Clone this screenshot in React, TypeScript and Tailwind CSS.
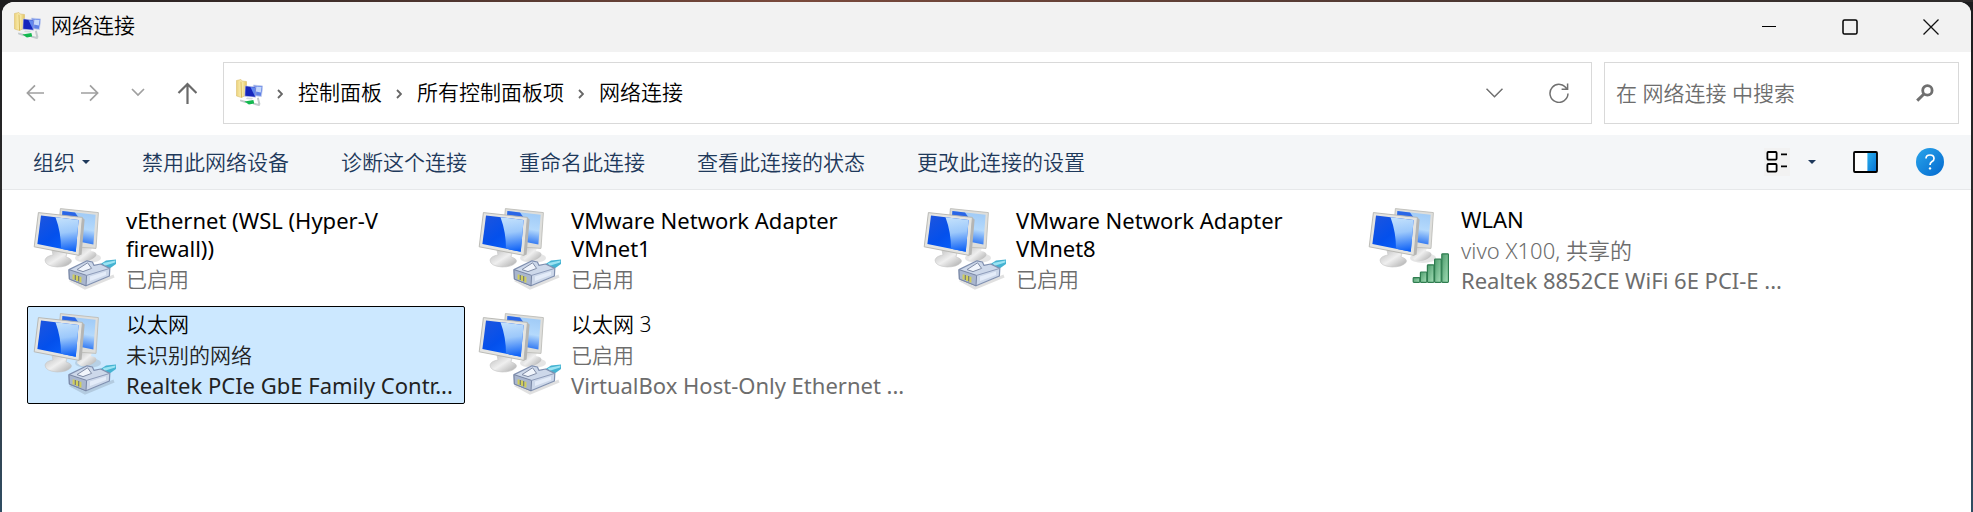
import { useState } from 'react';

type Badge = 'cable' | 'signal';

interface Connection {
  id: string;
  name: string;
  details: string[];
  badge: Badge;
}

const connections: Connection[] = [
  { id: 'wsl', name: 'vEthernet (WSL (Hyper-V firewall))', details: ['已启用'], badge: 'cable' },
  { id: 'vmnet1', name: 'VMware Network Adapter VMnet1', details: ['已启用'], badge: 'cable' },
  { id: 'vmnet8', name: 'VMware Network Adapter VMnet8', details: ['已启用'], badge: 'cable' },
  { id: 'wlan', name: 'WLAN', details: ['vivo X100, 共享的', 'Realtek 8852CE WiFi 6E PCI-E ...'], badge: 'signal' },
  { id: 'eth', name: '以太网', details: ['未识别的网络', 'Realtek PCIe GbE Family Contr...'], badge: 'cable' },
  { id: 'eth3', name: '以太网 3', details: ['已启用', 'VirtualBox Host-Only Ethernet ...'], badge: 'cable' },
];

const commands = ['禁用此网络设备', '诊断这个连接', '重命名此连接', '查看此连接的状态', '更改此连接的设置'];
const crumbs = ['控制面板', '所有控制面板项', '网络连接'];

// 以西文开头的行字号略大，纯西文行再加粗一档，与中文视觉上保持一致
function textCls(text: string) {
  if (!/^[A-Za-z]/.test(text)) return 'text-[21px]';
  return /[\u4e00-\u9fff]/.test(text) ? 'text-[22px]' : 'text-[22px] font-normal';
}

// 渐变只定义一次，供所有图标引用
function IconDefs() {
  return (
    <svg width="0" height="0" className="absolute" aria-hidden="true">
      <defs>
        <linearGradient id="screen" x1="0" y1="0" x2="0.9" y2="1">
          <stop offset="0" stopColor="#1f55dd" />
          <stop offset="0.5" stopColor="#0450ec" />
          <stop offset="1" stopColor="#0a66ff" />
        </linearGradient>
        <linearGradient id="glare" x1="0.3" y1="0" x2="0.4" y2="1">
          <stop offset="0" stopColor="#c3e1fc" />
          <stop offset="0.45" stopColor="#9cc8fb" />
          <stop offset="1" stopColor="#0f62f6" />
        </linearGradient>
        <linearGradient id="backScreen" x1="0.6" y1="0" x2="0.4" y2="1">
          <stop offset="0" stopColor="#9fcaf6" />
          <stop offset="0.5" stopColor="#b4d9fc" />
          <stop offset="1" stopColor="#1765f0" />
        </linearGradient>
        <linearGradient id="stand" x1="0" y1="0" x2="1" y2="1">
          <stop offset="0" stopColor="#b9b9b9" />
          <stop offset="0.5" stopColor="#efefef" />
          <stop offset="1" stopColor="#a9a9a9" />
        </linearGradient>
        <linearGradient id="bar" x1="0" y1="0" x2="1" y2="1">
          <stop offset="0" stopColor="#4c9b6c" />
          <stop offset="1" stopColor="#a6dfb8" />
        </linearGradient>
        <linearGradient id="folder" x1="0" y1="0" x2="1" y2="0">
          <stop offset="0" stopColor="#ecd27a" />
          <stop offset="0.5" stopColor="#fbf0b8" />
          <stop offset="1" stopColor="#e3c562" />
        </linearGradient>
        <linearGradient id="paneFill" x1="0" y1="0" x2="1" y2="1">
          <stop offset="0" stopColor="#2bb0ee" />
          <stop offset="1" stopColor="#0570d2" />
        </linearGradient>
      </defs>
    </svg>
  );
}

function FolderIcon() {
  return (
    <svg width="28" height="28" viewBox="0 0 28 28" className="shrink-0" aria-hidden="true">
      <path d="M1.5 1.5 L6 0.5 L7 2 L11.5 2.5 L11.5 16 L6.5 18.5 L1.5 17 Z" fill="url(#folder)" stroke="#dcc070" strokeWidth="0.6" />
      <path d="M6 2.5 L6.5 18.5" stroke="#d8ba5a" strokeWidth="1" />
      <path d="M18.4 6 L27.8 7 L26.4 17.4 L18.4 16.6 Z" fill="#5f80e6" stroke="#c8d2ee" strokeWidth="0.8" />
      <path d="M21.4 7.4 L26.6 8 L25.8 13.4 L20.9 12.6 Z" fill="#c5d8fb" />
      <path d="M10.2 6.8 L20.8 8 L20.6 18.2 L9.8 17.2 Z" fill="#1626bc" stroke="#dfe3ee" strokeWidth="0.6" />
      <path d="M15.4 8 L20.2 8.6 L20 17.6 Z" fill="#6288ee" />
      <path d="M12 18.6 L18 19 L17 20.6 L11 20 Z" fill="#d7dade" />
      <path d="M6 21.6 L10.4 23 M18.8 24.6 L24 26 M23 19.6 L24.4 25" stroke="#c3cacc" strokeWidth="2" fill="none" strokeLinecap="round" />
      <path d="M9.4 22.6 L18.4 21 L19.2 24.4 L13.9 25.4 Z" fill="#14b850" />
    </svg>
  );
}

function ConnectionIcon({ badge }: { badge: Badge }) {
  return (
    <svg width="84" height="84" viewBox="0 0 84 84" className="shrink-0" aria-hidden="true">
      {/* 后面的显示器 */}
      <ellipse cx="55" cy="50" rx="13" ry="5" fill="#000" opacity="0.1" />
      <path d="M47 37 L59 39 L58 43 Q65 44 63 48 Q58 54 48 53 L44 50 Z" fill="url(#stand)" />
      <path d="M27.4 0.6 L65.4 4.6 L63 40.4 L44 39 L25 30 Z" fill="#dededb" stroke="#bdbdb9" strokeWidth="0.9" />
      <path d="M29.4 3 L62.6 6.8 L60.4 36.6 L28 30 Z" fill="url(#backScreen)" />
      <path d="M29.4 3 L42 4.4 L46 10 L29 8 Z" fill="#2a66e6" />
      {/* 前面的显示器 */}
      <path d="M19 42 L34 45 L33 49 Q40 51 38 54.5 Q34 59 24 59 Q12 58 12 52 Q13 48 20 47 Z" fill="url(#stand)" stroke="#c4c4c4" strokeWidth="0.6" />
      <path d="M5.4 4.6 L49.4 9.4 L46 47.4 L1.2 38.8 Z" fill="#e4e4e1" stroke="#b4b4b0" strokeWidth="0.9" />
      <path d="M49.4 9.4 L51.6 11.4 L48.6 46.4 L46 47.4 Z" fill="#b5b5b3" />
      <path d="M8 7.4 L45.6 12 L42.8 43.8 L4.4 36 Z" fill="url(#screen)" />
      <path d="M22.5 9.2 L45.6 12 L42.8 43.8 L28 40.8 Q28 24 22.5 9.2 Z" fill="url(#glare)" />
      {badge === 'cable' ? (
        <>
          <path d="M37 72 L52 80 L81 68" stroke="#000" strokeOpacity="0.12" strokeWidth="3" fill="none" />
          <path d="M66 57 L73 52.4 L83 51.6 L83 56 L76 61 L68 62 Z" fill="#45b3d2" />
          <path d="M70 55 L82.5 52.6 L82 54.4 L71 58 Z" fill="#9be3f2" />
          <path d="M36 61.6 L54 52.8 L59.4 54 L61 57.4 L67.6 56 L76.8 60.4 L76.4 68 L53 77.8 L36.4 71 Z" fill="#cdd8ea" stroke="#8090b0" strokeWidth="1.2" strokeLinejoin="round" />
          <path d="M36 61.6 L53.6 67.4 L53 77.8 L36.4 71 Z" fill="#a9b6ce" stroke="#7886a4" strokeWidth="1" />
          <path d="M53.6 67.4 L76.8 60.4" stroke="#8e9cba" strokeWidth="1" />
          <path d="M44 61.6 L54.6 54.8 L58.6 60.4 L50 63.6 Z" fill="#f1f5fc" stroke="#808ca6" strokeWidth="1" />
          <path d="M57 68.4 L73 63.6 L73 67 L57 73 Z" fill="#e4ecf9" />
          <path d="M40.6 66.4 L40.6 71.6 M44 67.6 L44 73 M47.4 68.8 L47.4 74.4" stroke="#d2cf58" strokeWidth="2" />
          <path d="M42.3 67 L42.3 72 M45.7 68 L45.7 73.4" stroke="#6d6f50" strokeWidth="0.9" />
        </>
      ) : (
        <g fill="url(#bar)" stroke="#2f7d50" strokeWidth="1.2">
          <rect x="45.2" y="69.6" width="6.6" height="4.8" rx="0.8" />
          <rect x="52.4" y="64" width="6.4" height="10.4" rx="0.8" />
          <rect x="59.4" y="56.8" width="6.6" height="17.6" rx="0.8" />
          <rect x="66.6" y="51.2" width="6.6" height="23.2" rx="0.8" />
          <rect x="73.8" y="45.8" width="6.6" height="28.6" rx="0.8" />
        </g>
      )}
    </svg>
  );
}

function Caret() {
  return (
    <svg width="8" height="4" viewBox="0 0 8 4" aria-hidden="true">
      <path d="M0 0 H8 L4 4 Z" fill="#1e395b" />
    </svg>
  );
}

function TitleBar() {
  return (
    <header className="flex h-[50px] items-center justify-between bg-[#f2f2f2] pl-[11px]">
      <div className="flex items-center gap-2.5 pb-0.5">
        <FolderIcon />
        <h1 className="pb-0.5 text-black">网络连接</h1>
      </div>
      <div className="flex h-full">
        <button type="button" aria-label="最小化" className="flex w-[81px] items-center justify-center hover:bg-black/5">
          <svg width="16" height="16" viewBox="0 0 16 16">
            <path d="M1 7.5 H15" stroke="#000" />
          </svg>
        </button>
        <button type="button" aria-label="最大化" className="flex w-[81px] items-center justify-center hover:bg-black/5">
          <svg width="16" height="16" viewBox="0 0 16 16">
            <rect x="1" y="1" width="14" height="14" rx="1.6" fill="none" stroke="#000" strokeWidth="1.5" />
          </svg>
        </button>
        <button type="button" aria-label="关闭" className="flex w-[81px] items-center justify-center hover:bg-black/5">
          <svg width="16" height="16" viewBox="0 0 16 16">
            <path d="M0.5 0.5 L15.5 15.5 M15.5 0.5 L0.5 15.5" stroke="#111" strokeWidth="1.3" />
          </svg>
        </button>
      </div>
    </header>
  );
}

function AddressRow() {
  const [keyword, setKeyword] = useState('');

  return (
    <div className="flex items-center gap-3 pt-2.5 pr-3 pb-[11px]">
      <div className="flex w-[209px] shrink-0 items-center pl-6">
        <button type="button" aria-label="后退" className="mr-[37px]">
          <svg width="18" height="18" viewBox="0 0 18 18" fill="none" stroke="#a0a0a0" strokeWidth="1.7">
            <path d="M18 9 H1.4 M9 1.4 L1.4 9 L9 16.6" />
          </svg>
        </button>
        <button type="button" aria-label="前进" className="mr-8">
          <svg width="18" height="18" viewBox="0 0 18 18" fill="none" stroke="#a0a0a0" strokeWidth="1.7">
            <path d="M0 9 H16.6 M9 1.4 L16.6 9 L9 16.6" />
          </svg>
        </button>
        <button type="button" aria-label="最近浏览的位置" className="mr-8">
          <svg width="14" height="18" viewBox="0 0 14 18" fill="none" stroke="#a0a0a0" strokeWidth="1.7">
            <path d="M1 5 L7 11 L13 5" />
          </svg>
        </button>
        <button type="button" aria-label="向上">
          <svg width="20" height="22" viewBox="0 0 20 22" fill="none" stroke="#6a6a6a" strokeWidth="2.2">
            <path d="M10.5 22 V2 M1.5 11 L10.5 2 L19.5 11" />
          </svg>
        </button>
      </div>

      <div className="flex h-[62px] min-w-0 flex-1 items-center border border-[#d9d9d9] pr-[22px] pl-[11px]">
        <FolderIcon />
        <nav aria-label="地址" className="flex min-w-0 flex-1 items-center pb-0.5">
          {crumbs.map((crumb) => (
            <span key={crumb} className="flex items-center">
              <svg width="6" height="10" viewBox="0 0 6 10" className="mt-1 mr-[15px] ml-3.5" fill="none" stroke="#666" strokeWidth="1.8">
                <path d="M1 1 L5 5 L1 9" />
              </svg>
              <a href="#" className="whitespace-nowrap text-black">{crumb}</a>
            </span>
          ))}
        </nav>
        <button type="button" aria-label="以前的位置" className="mr-[46px]">
          <svg width="17" height="10" viewBox="0 0 17 10" fill="none" stroke="#707070" strokeWidth="1.5">
            <path d="M0.5 0.8 L8.5 8.8 L16.5 0.8" />
          </svg>
        </button>
        <button type="button" aria-label="刷新">
          <svg width="20" height="20" viewBox="0 0 20 20" fill="none" stroke="#707070" strokeWidth="1.5">
            <path d="M18 6.2 A9 9 0 1 0 19 10.6 M18.6 0.4 V6.2 H12.6" />
          </svg>
        </button>
      </div>

      <div className="flex h-[62px] w-[355px] shrink-0 items-center border border-[#d9d9d9] pr-6 pl-[11px]">
        <input
          type="search"
          aria-label="搜索"
          value={keyword}
          onChange={(e) => setKeyword(e.target.value)}
          placeholder="在 网络连接 中搜索"
          className="min-w-0 flex-1 bg-transparent text-black outline-none placeholder:text-[#6d6d6d]"
        />
        <button type="button" aria-label="开始搜索">
          <svg width="18" height="18" viewBox="0 0 18 18" fill="none" stroke="#6f6f6f">
            <circle cx="11.4" cy="6.4" r="4.7" strokeWidth="2.8" />
            <path d="M8 10 L1.2 16.6" strokeWidth="3" />
          </svg>
        </button>
      </div>
    </div>
  );
}

function CommandBar() {
  return (
    <div className="flex h-[55px] items-center justify-between border-b border-[#e6e8ea] bg-[#f4f6f8] pr-[27px] pl-[31px] text-[#1e395b]">
      <div className="flex items-center gap-[52px] whitespace-nowrap">
        <button type="button" className="flex items-center gap-[7px]">
          组织
          <Caret />
        </button>
        {commands.map((command) => (
          <button key={command} type="button" className="hover:underline">{command}</button>
        ))}
      </div>
      <div className="flex items-center">
        <button type="button" aria-label="更改视图" className="mr-[18px] bg-[#f2f2f2] px-0.5 py-[3px]">
          <svg width="22" height="22" viewBox="0 0 22 22" fill="none" stroke="#000" strokeWidth="1.8">
            <rect x="1.4" y="1" width="9.2" height="7.6" rx="1" fill="#fff" />
            <rect x="1.4" y="13" width="9.2" height="7.6" rx="1" fill="#fff" />
            <path d="M15 3.4 H21 M15 15.4 H21" />
          </svg>
        </button>
        <button type="button" aria-label="更多视图选项" className="mr-[37px]">
          <Caret />
        </button>
        <button type="button" aria-label="显示预览窗格" className="mr-[38px]">
          <svg width="25" height="22" viewBox="0 0 25 22">
            <rect x="1" y="1" width="23" height="20" rx="1" fill="#fff" />
            <rect x="14.4" y="1.6" width="9.4" height="19" fill="url(#paneFill)" />
            <rect x="1" y="1" width="23" height="20" rx="1" fill="none" stroke="#000" strokeWidth="1.8" />
          </svg>
        </button>
        <button
          type="button"
          aria-label="获取帮助"
          className="flex size-7 items-center justify-center rounded-full bg-linear-to-br from-[#2aa5ea] to-[#0568cf]"
        >
          <svg width="10" height="16" viewBox="0 0 10 16" fill="none" stroke="#fff" strokeWidth="1.7">
            <path d="M1 4.6 Q1 1 5 1 Q9 1 9 4.4 Q9 6.4 7 7.6 Q5 8.8 5 11" />
            <circle cx="5" cy="14.4" r="1.2" fill="#fff" stroke="none" />
          </svg>
        </button>
      </div>
    </div>
  );
}

interface ConnectionTileProps {
  connection: Connection;
  selected: boolean;
  onSelect: () => void;
}

function ConnectionTile({ connection, selected, onSelect }: ConnectionTileProps) {
  const tileCls = selected
    ? 'rounded-xs border-black bg-[#cce8ff]'
    : 'border-transparent';
  const detailCls = selected ? 'text-[#222]' : 'text-[#6d6d6d]';

  return (
    <button
      type="button"
      aria-pressed={selected}
      onClick={onSelect}
      className={`flex h-[98px] items-center gap-[9px] border pr-3 pl-[5px] text-left ${tileCls}`}
    >
      <ConnectionIcon badge={connection.badge} />
      <span className="flex min-w-0 flex-1 flex-col gap-0.5">
        <span className={`max-w-[290px] leading-7 text-black ${textCls(connection.name)}`}>
          {connection.name}
        </span>
        <span className={`flex flex-col whitespace-nowrap ${detailCls}`}>
          {connection.details.map((line) => (
            <span key={line} className={`leading-[30px] ${textCls(line)}`}>{line}</span>
          ))}
        </span>
      </span>
    </button>
  );
}

export default function App() {
  const [selectedId, setSelectedId] = useState('eth');

  return (
    <div className="flex min-h-screen flex-col bg-[#242424] font-['Noto_Sans','Noto_Sans_CJK_SC',sans-serif] text-[21px] leading-7 font-[350]">
      <IconDefs />
      {/* 窗口四周露出的桌面 */}
      <div className="h-0.5 bg-linear-to-r from-[#1c1c1e] via-[#7a4a3c] via-40% to-[#2c2a2a]" />
      <div className="flex flex-1 bg-linear-to-b from-[#1c1c1e] via-[#333] via-60% to-[#2f4d63] px-0.5">
        <div className="flex min-w-0 flex-1 flex-col overflow-hidden rounded-t-xl bg-white">
          <TitleBar />
          <AddressRow />
          <CommandBar />
          <main className="grid grid-cols-[repeat(auto-fill,438px)] gap-[7px] pt-[11px] pl-[25px]">
            {connections.map((connection) => (
              <ConnectionTile
                key={connection.id}
                connection={connection}
                selected={connection.id === selectedId}
                onSelect={() => setSelectedId(connection.id)}
              />
            ))}
          </main>
        </div>
      </div>
    </div>
  );
}
